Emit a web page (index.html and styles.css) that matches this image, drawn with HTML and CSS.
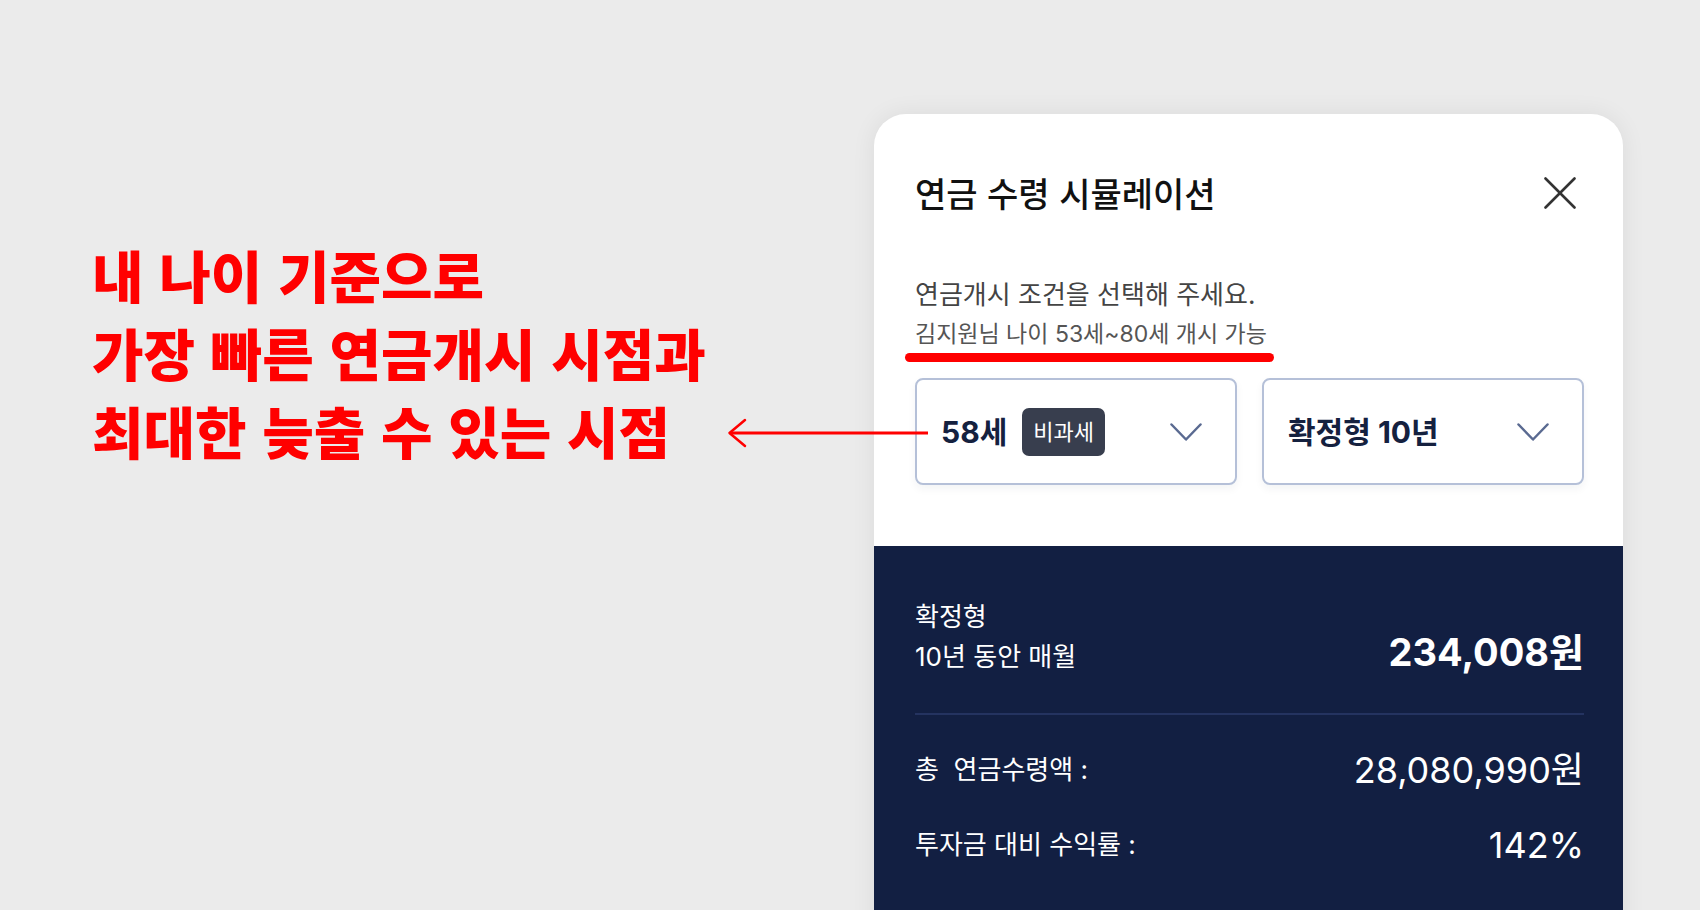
FILE: index.html
```html
<!DOCTYPE html>
<html lang="ko">
<head>
<meta charset="utf-8">
<title>연금 수령 시뮬레이션</title>
<link rel="stylesheet" href="styles.css">
</head>
<body>
<main class="stage">
  <section class="callout">
    <p class="callout-line">내 나이 기준으로</p>
    <p class="callout-line">가장 빠른 연금개시 시점과</p>
    <p class="callout-line">최대한 늦출 수 있는 시점</p>
  </section>

  <svg class="callout-arrow" width="202" height="32" viewBox="0 0 202 32" aria-hidden="true">
    <line x1="4" y1="15" x2="202" y2="15" stroke="#ff0000" stroke-width="3"/>
    <polyline points="19,2 3.5,15 19,28" fill="none" stroke="#ff0000" stroke-width="2.5" stroke-linecap="round" stroke-linejoin="round"/>
  </svg>

  <article class="sheet">
    <div class="sheet-top">
      <header class="sheet-header">
        <h1 class="sheet-title">연금 수령 시뮬레이션</h1>
        <button class="close-btn" type="button" aria-label="닫기">
          <svg width="32" height="32" viewBox="0 0 32 32">
            <line x1="1.5" y1="1.5" x2="30.5" y2="30.5" stroke="#333" stroke-width="2.6" stroke-linecap="round"/>
            <line x1="30.5" y1="1.5" x2="1.5" y2="30.5" stroke="#333" stroke-width="2.6" stroke-linecap="round"/>
          </svg>
        </button>
      </header>

      <p class="guide">연금개시 조건을 선택해 주세요.</p>
      <p class="guide-sub">김지원님 나이 53세~80세 개시 가능<span class="highlight-bar"></span></p>

      <div class="selects">
        <div class="select">
          <div class="select-value">
            <span class="select-text">58세</span>
            <span class="badge">비과세</span>
          </div>
          <svg class="chevron" width="32" height="18" viewBox="0 0 32 18">
            <polyline points="1.5,1.5 16,16.5 30.5,1.5" fill="none" stroke="#5a6a91" stroke-width="2.5" stroke-linecap="round" stroke-linejoin="round"/>
          </svg>
        </div>
        <div class="select">
          <div class="select-value">
            <span class="select-text">확정형 10년</span>
          </div>
          <svg class="chevron" width="32" height="18" viewBox="0 0 32 18">
            <polyline points="1.5,1.5 16,16.5 30.5,1.5" fill="none" stroke="#5a6a91" stroke-width="2.5" stroke-linecap="round" stroke-linejoin="round"/>
          </svg>
        </div>
      </div>
    </div>

    <div class="sheet-result">
      <div class="monthly">
        <div class="monthly-label">
          <span>확정형</span>
          <span>10년 동안 매월</span>
        </div>
        <div class="monthly-amount">234,008원</div>
      </div>
      <div class="divider"></div>
      <dl class="stats">
        <div class="stat-row">
          <dt>총&nbsp; 연금수령액 :</dt>
          <dd>28,080,990원</dd>
        </div>
        <div class="stat-row">
          <dt>투자금 대비 수익률 :</dt>
          <dd>142%</dd>
        </div>
      </dl>
    </div>
  </article>
</main>
</body>
</html>
```

FILE: styles.css
```css
* {
  box-sizing: border-box;
}

html, body {
  margin: 0;
  padding: 0;
}

body {
  background: #ebebeb;
  font-family: "Inter", "Noto Sans CJK KR", sans-serif;
  color: #111;
}

.stage {
  position: relative;
  display: flex;
  align-items: flex-start;
  height: 910px;
  overflow: hidden;
  padding: 0 77px 0 92px;
}

.callout {
  margin-top: 235px;
}

.callout-line {
  margin: 0;
  font-family: "Noto Sans CJK KR", sans-serif;
  font-weight: 900;
  font-size: 56px;
  line-height: 78px;
  color: #ff0000;
  white-space: nowrap;
}

.callout-arrow {
  position: absolute;
  left: 726px;
  top: 418px;
  z-index: 2;
}

.sheet {
  margin-left: auto;
  margin-top: 114px;
  width: 749px;
  height: 830px;
  flex-shrink: 0;
  display: flex;
  flex-direction: column;
  background: #fff;
  border-radius: 32px 32px 0 0;
  overflow: hidden;
  box-shadow: 0 0 24px rgba(0, 0, 0, 0.07);
}

.sheet-top {
  padding: 59px 39px 61px 41px;
}

.sheet-header {
  display: flex;
  align-items: center;
  justify-content: space-between;
  height: 40px;
}

.sheet-title {
  margin: 0;
  font-family: "Noto Sans CJK KR", sans-serif;
  font-size: 34px;
  font-weight: 500;
  line-height: 40px;
  color: #111;
}

.close-btn {
  display: flex;
  width: 32px;
  height: 32px;
  padding: 0;
  margin-right: 8px;
  border: 0;
  background: none;
}

.guide {
  margin: 65px 0 0;
  font-size: 26px;
  line-height: 34px;
  color: #444;
}

.guide-sub {
  position: relative;
  margin: 7px 0 0;
  font-size: 23px;
  line-height: 30px;
  color: #555;
}

.highlight-bar {
  position: absolute;
  left: -10px;
  top: 34px;
  width: 369px;
  height: 9px;
  border-radius: 5px;
  background: #ff0000;
}

.selects {
  display: grid;
  grid-template-columns: 1fr 1fr;
  gap: 25px;
  margin-top: 29px;
}

.select {
  display: flex;
  align-items: center;
  justify-content: space-between;
  height: 107px;
  padding: 0 33px 0 24px;
  border: 2px solid #b5c0d8;
  border-radius: 8px;
  background: #fff;
  box-shadow: 0 4px 8px rgba(20, 30, 60, 0.05);
}

.select-value {
  display: flex;
  align-items: center;
}

.select-text {
  font-size: 30px;
  font-weight: 700;
  line-height: 40px;
  color: #15213f;
}

.badge {
  margin-left: 15px;
  height: 48px;
  padding: 0 11px;
  border-radius: 7px;
  background: #383e4e;
  color: #fff;
  font-size: 22px;
  line-height: 48px;
}

.sheet-result {
  flex: 1;
  background: #121f42;
  padding: 51px 39px 60px 41px;
  color: #fff;
}

.monthly {
  display: flex;
  justify-content: space-between;
  align-items: last baseline;
}

.monthly-label {
  display: flex;
  flex-direction: column;
  font-size: 26px;
  line-height: 40px;
}

.monthly-amount {
  font-size: 38px;
  font-weight: 700;
  line-height: 40px;
}

.divider {
  height: 2px;
  margin-top: 36px;
  background: #243360;
}

.stats {
  display: flex;
  flex-direction: column;
  gap: 27px;
  margin: 31px 0 0;
}

.stat-row {
  display: flex;
  align-items: center;
  justify-content: space-between;
  height: 48px;
}

.stat-row dt {
  font-size: 26px;
  line-height: 48px;
}

.stat-row dd {
  margin: 0;
  font-size: 36px;
  line-height: 48px;
}
```
